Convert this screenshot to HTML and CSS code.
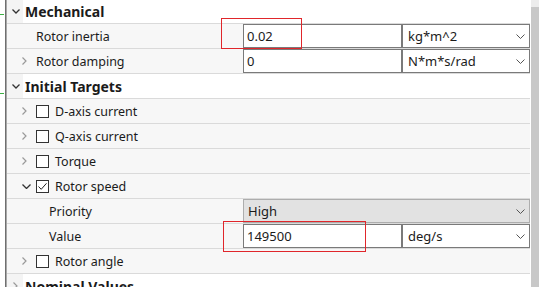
FILE: index.html
```html
<!DOCTYPE html>
<html>
<head>
<meta charset="utf-8">
<link rel="stylesheet" href="styles.css">
</head>
<body>
<div class="page">
  <div class="left-strip">
    <span class="mark mark-a"></span>
    <span class="mark mark-b"></span>
  </div>
  <div class="tree">
    <div class="row header">
      <span class="gutter"><svg class="chev-down dark" width="8" height="5" viewBox="0 0 8 5"><path d="M0.5 0.5 L4 4 L7.5 0.5" /></svg></span>
      <span class="htext">Mechanical</span>
    </div>
    <div class="row item">
      <div class="label lvl1"><span class="chev-space"></span><span class="text">Rotor inertia</span></div>
      <div class="values">
        <div class="field num">0.02</div>
        <div class="field unit">kg*m^2<svg class="sel-chev" width="9" height="5" viewBox="0 0 9 5"><path d="M0.5 0.5 L4.5 4.5 L8.5 0.5"/></svg></div>
      </div>
    </div>
    <div class="row item">
      <div class="label lvl1"><span class="chev-space"><svg class="chev-right" width="5" height="8" viewBox="0 0 5 8"><path d="M0.5 0.5 L4 4 L0.5 7.5"/></svg></span><span class="text">Rotor damping</span></div>
      <div class="values">
        <div class="field num">0</div>
        <div class="field unit">N*m*s/rad<svg class="sel-chev" width="9" height="5" viewBox="0 0 9 5"><path d="M0.5 0.5 L4.5 4.5 L8.5 0.5"/></svg></div>
      </div>
    </div>
    <div class="row header">
      <span class="gutter"><svg class="chev-down dark" width="8" height="5" viewBox="0 0 8 5"><path d="M0.5 0.5 L4 4 L7.5 0.5" /></svg></span>
      <span class="htext">Initial Targets</span>
    </div>
    <div class="row item">
      <div class="label lvl1"><span class="chev-space"><svg class="chev-right" width="5" height="8" viewBox="0 0 5 8"><path d="M0.5 0.5 L4 4 L0.5 7.5"/></svg></span><span class="box"></span><span class="text">D-axis current</span></div>
    </div>
    <div class="row item">
      <div class="label lvl1"><span class="chev-space"><svg class="chev-right" width="5" height="8" viewBox="0 0 5 8"><path d="M0.5 0.5 L4 4 L0.5 7.5"/></svg></span><span class="box"></span><span class="text">Q-axis current</span></div>
    </div>
    <div class="row item">
      <div class="label lvl1"><span class="chev-space"><svg class="chev-right" width="5" height="8" viewBox="0 0 5 8"><path d="M0.5 0.5 L4 4 L0.5 7.5"/></svg></span><span class="box"></span><span class="text">Torque</span></div>
    </div>
    <div class="row item">
      <div class="label lvl1"><span class="chev-space"><svg class="chev-down dark" width="9" height="5" viewBox="0 0 9 5"><path d="M0.5 0.5 L4.5 4.5 L8.5 0.5"/></svg></span><span class="box"><svg width="11" height="11" viewBox="0 0 11 11"><path d="M1.5 5.5 L4.2 8.3 L9.5 2.3" fill="none" stroke="#222" stroke-width="1"/></svg></span><span class="text">Rotor speed</span></div>
    </div>
    <div class="row item">
      <div class="label lvl2"><span class="text">Priority</span></div>
      <div class="values">
        <div class="field combo">High<svg class="sel-chev" width="9" height="5" viewBox="0 0 9 5"><path d="M0.5 0.5 L4.5 4.5 L8.5 0.5"/></svg></div>
      </div>
    </div>
    <div class="row item">
      <div class="label lvl2"><span class="text">Value</span></div>
      <div class="values">
        <div class="field num">149500</div>
        <div class="field unit">deg/s<svg class="sel-chev" width="9" height="5" viewBox="0 0 9 5"><path d="M0.5 0.5 L4.5 4.5 L8.5 0.5"/></svg></div>
      </div>
    </div>
    <div class="row item">
      <div class="label lvl1"><span class="chev-space"><svg class="chev-right" width="5" height="8" viewBox="0 0 5 8"><path d="M0.5 0.5 L4 4 L0.5 7.5"/></svg></span><span class="box"></span><span class="text">Rotor angle</span></div>
    </div>
    <div class="row header">
      <span class="gutter"><svg class="chev-right" width="5" height="8" viewBox="0 0 5 8"><path d="M0.5 0.5 L4 4 L0.5 7.5"/></svg></span>
      <span class="htext">Nominal Values</span>
    </div>
  </div>
  <div class="scrollbar"><div class="sb-top"></div><div class="sb-thumb"></div></div>
  <div class="callout callout-a"></div>
  <div class="callout callout-b"></div>
</div>
</body>
</html>
```
FILE: styles.css
```css
html, body {
  margin: 0;
  padding: 0;
  background: #ffffff;
  overflow: hidden;
}
.page {
  position: relative;
  display: flex;
  width: 539px;
  height: 287px;
  overflow: hidden;
  font-family: "Noto Sans", "Open Sans", sans-serif;
  font-size: 12.5px;
  color: #1b1b1b;
}
.left-strip {
  position: relative;
  width: 5px;
  border-right: 1px solid #6f6f6f;
  box-shadow: 1px 0 0 #a8a8a8;
  margin-right: 1px;
  flex: none;
}
.mark {
  position: absolute;
  left: 0;
  width: 4px;
  height: 1px;
  background: #3cb043;
}
.mark-a { top: 14px; }
.mark-b { top: 93px; }
.tree {
  width: 523px;
  flex: none;
  margin-top: -1px;
}
.row {
  display: flex;
  align-items: center;
  height: 25px;
  box-sizing: border-box;
  border-bottom: 1px solid #dadada;
}
.row.header {
  background: #ffffff;
}
.gutter {
  width: 15px;
  align-self: stretch;
  display: flex;
  align-items: center;
  justify-content: center;
  background: #f4f4f4;
  margin-right: 2px;
  padding-left: 1px;
}
.htext {
  font-weight: bold;
  font-size: 14px;
}
.row.item {
  background: #f7f7f7;
}
.label {
  width: 236px;
  flex: none;
  display: flex;
  align-items: center;
  height: 100%;
}
.lvl1 { padding-left: 15px; box-sizing: border-box; }
.lvl2 { padding-left: 42px; box-sizing: border-box; }
.chev-space {
  width: 14px;
  display: flex;
  align-items: center;
  justify-content: flex-start;
  flex: none;
}
.chev-right path {
  fill: none;
  stroke: #9a9a9a;
  stroke-width: 1.2;
}
.chev-down path {
  fill: none;
  stroke: #333;
  stroke-width: 1.3;
}
.box {
  width: 11px;
  height: 11px;
  border: 1px solid #333;
  background: #fff;
  margin-right: 6px;
  display: flex;
  flex: none;
}
.values {
  display: flex;
  height: 100%;
  flex: none;
  width: 287px;
}
.field {
  position: relative;
  box-sizing: border-box;
  height: 24px;
  border: 1px solid #7a7a7a;
  background: #fff;
  display: flex;
  align-items: center;
  padding-left: 3px;
  white-space: nowrap;
  font-size: 13px;
}
.field.num { width: 159px; }
.field.unit { width: 128px; padding-left: 5px; }
.field.combo {
  width: 287px;
  background: #e2e2e2;
  border-color: #adadad;
  padding-left: 4px;
}
.sel-chev {
  position: absolute;
  right: 4px;
  top: 9px;
}
.sel-chev path {
  fill: none;
  stroke: #555;
  stroke-width: 1;
}
.scrollbar {
  width: 8px;
  margin-left: 1px;
  flex: none;
  display: flex;
  flex-direction: column;
}
.sb-top {
  height: 7px;
  background: #ececec;
}
.sb-thumb {
  flex: 1;
  background: #c8c8c8;
}
.callout {
  position: absolute;
  z-index: 5;
  border: 1px solid #e0262b;
  box-sizing: border-box;
}
.callout-a { left: 221px; top: 18px; width: 81px; height: 31px; }
.callout-b { left: 223px; top: 221px; width: 143px; height: 31px; }
```
